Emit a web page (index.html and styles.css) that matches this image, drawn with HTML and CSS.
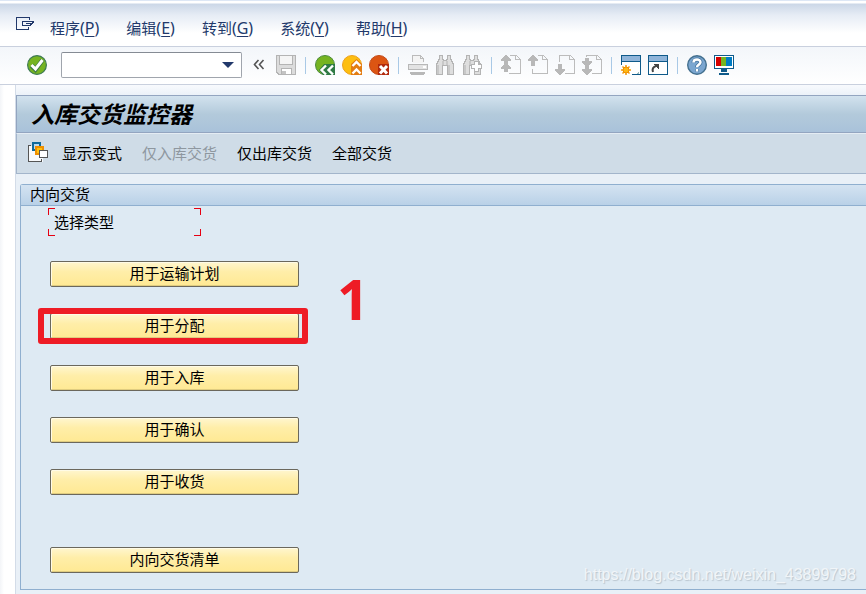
FILE: index.html
```html
<!DOCTYPE html>
<html lang="zh-CN">
<head>
    <meta charset="utf-8">
    <title>入库交货监控器</title>
    <link rel="stylesheet" href="styles.css">
</head>
<body>
    <nav class="menubar">
        <button class="icon window-menu" aria-label="菜单">
            <svg width="20" height="20" viewBox="0 0 20 20" fill="none" stroke="#22396b" shape-rendering="crispEdges">
                <path d="M13.5 4V1.5H.5v12h12V11"/>
                <path d="M18 5.500H6.500v4h7M17.500 6l-4 4M14.500 7.500H10"/>
            </svg>
        </button>
        <button class="menu">程序<span>(<u>P</u>)</span></button>
        <button class="menu">编辑<span>(<u>E</u>)</span></button>
        <button class="menu">转到<span>(<u>G</u>)</span></button>
        <button class="menu">系统<span>(<u>Y</u>)</span></button>
        <button class="menu">帮助<span>(<u>H</u>)</span></button>
    </nav>

    <div class="toolbar">
        <button class="icon ok" aria-label="确认">
            <svg width="20" height="20" viewBox="0 0 20 20">
                <circle cx="10" cy="10" r="9.4" fill="#76b421" stroke="#3e7a55" stroke-width="1.2"/>
                <path d="M4.5 10.5l4 4L15.5 5" fill="none" stroke="#3e7a45" stroke-width="4.6"/>
                <path d="M4.5 10l4 4L15.5 5" fill="none" stroke="#fff" stroke-width="3"/>
            </svg>
        </button>
        <div class="command">
            <input type="text" aria-label="命令">
            <button aria-label="历史">
                <svg width="12" height="6" viewBox="0 0 12 6"><path d="M0 0h12L9 3 6 6 3 3z" fill="#22396b"/></svg>
            </button>
        </div>
        <button class="icon collapse" aria-label="收起">
            <svg width="12" height="20" viewBox="0 0 12 20" fill="none" stroke="#555" stroke-width="1.6"><path d="M5.5 5L1.5 9.5l4 4.5M10.5 5l-4 4.5 4 4.5"/></svg>
        </button>
        <button class="icon" aria-label="保存">
            <svg width="20" height="20" viewBox="0 0 20 20" shape-rendering="crispEdges">
                <path d="M.5.5h19v19H3l-2.500-2.500z" fill="#dcdcdc" stroke="#b4b4b4"/>
                <path d="M3.500.5h13v9h-13z" fill="#f5f5f5" stroke="#b4b4b4"/>
                <path d="M5.500 13.500h10v6h-10z" fill="#fff" stroke="#b4b4b4"/>
                <path d="M6 16h4v3H6z" fill="#c4c4c4"/>
            </svg>
        </button>
        <span class="sep"></span>
        <button class="icon" aria-label="返回">
            <svg width="20" height="20" viewBox="0 0 20 20">
                <circle cx="10" cy="10" r="9.500" fill="#76b421" stroke="#4c8a3c"/>
                <path d="M20 9v11H8l-4-5 5-6z" fill="#2f7a44"/>
                <path d="M11 10.500L6.500 15l4.500 4.500M18 10.500L13.500 15l4.500 4.500" fill="none" stroke="#fff" stroke-width="2.400"/>
            </svg>
        </button>
        <button class="icon" aria-label="退出">
            <svg width="20" height="20" viewBox="0 0 20 20">
                <circle cx="10" cy="10" r="9.500" fill="#fdbe10" stroke="#eda01c"/>
                <path d="M9 20V9l5.500-5L20 9v11z" fill="#e37c12"/>
                <path d="M10.500 11l4-4 4 4M10.500 18.500l4-4 4 4" fill="none" stroke="#fff" stroke-width="2.400"/>
            </svg>
        </button>
        <button class="icon" aria-label="取消">
            <svg width="20" height="20" viewBox="0 0 20 20">
                <circle cx="10" cy="10" r="9.500" fill="#dc5513" stroke="#c34a17"/>
                <path d="M9 9h11v11H9z" fill="#b22a0d"/>
                <path d="M11 11l7 7.500M18 11l-7 7.500" fill="none" stroke="#fff" stroke-width="3"/>
            </svg>
        </button>
        <span class="sep"></span>
        <button class="icon" aria-label="打印">
            <svg width="20" height="20" viewBox="0 0 20 20" shape-rendering="crispEdges">
                <path d="M4.500 7.500v-7h8l3 3v4" fill="#f4f4f4"/>
                <path d="M4.500 7V.5h8l3 3V7M12.500.5v3h3" fill="none" stroke="#bbb"/>
                <rect x=".5" y="9.500" width="19" height="5" rx="1" fill="#e3e3e3" stroke="#b8b8b8"/>
                <path d="M15 11h3v2h-3z" fill="#fff"/>
                <path d="M2 17h15v1l-1 2H3l-1-2z" fill="#b8b8b8"/>
            </svg>
        </button>
        <button class="icon" aria-label="查找">
            <svg width="20" height="20" viewBox="0 0 20 20" shape-rendering="crispEdges">
                <path d="M4.500.5h3v3l1 2h3l1-2v-3h3v3l3 6v10h-6v-9h-5v9h-6v-10l3-6z" fill="#dedede" stroke="#b4b4b4"/>
                <path d="M3 10v9M14 10v9M8 6v4M12 6v4" stroke="#c8c8c8" stroke-width="2"/>
            </svg>
        </button>
        <button class="icon" aria-label="查找下一个">
            <svg width="20" height="20" viewBox="0 0 20 20" shape-rendering="crispEdges">
                <path d="M4.500.5h3v3l1 2h3l1-2v-3h3v3l3 6v10h-6v-9h-5v9h-6v-10l3-6z" fill="#dedede" stroke="#b4b4b4"/>
                <path d="M3 10v9M8 6v4" stroke="#c8c8c8" stroke-width="2"/>
                <path d="M12.500 6.500h4v3h3v4h-3v3h-4v-3h-3v-4h3z" fill="#fff" stroke="#b4b4b4"/>
            </svg>
        </button>
        <span class="sep"></span>
        <button class="icon" aria-label="首页">
            <svg width="20" height="20" viewBox="0 0 20 20" shape-rendering="crispEdges">
                <path d="M8.500.5h7l4 4v14h-12M14.500.5v4h4" fill="none" stroke="#bcbcbc"/>
                <path d="M5 0l5 4v2H7v3H3V6H0V4zM5 8l5 4v2H7v3H3v-3H0v-2z" fill="#b8b8b8"/>
            </svg>
        </button>
        <button class="icon" aria-label="上一页">
            <svg width="20" height="20" viewBox="0 0 20 20" shape-rendering="crispEdges">
                <path d="M9.500.5h6l4 4v14h-15v-5M14.500.5v4h4" fill="none" stroke="#bcbcbc"/>
                <path d="M5 0l5 4v2H7v5H3V6H0V4z" fill="#b8b8b8"/>
            </svg>
        </button>
        <button class="icon" aria-label="下一页">
            <svg width="20" height="20" viewBox="0 0 20 20" shape-rendering="crispEdges">
                <path d="M4.500 7v-6.500h11l4 4v14h-10M14.500.5v4h4" fill="none" stroke="#bcbcbc"/>
                <path d="M3 9h4v5h3v2l-5 4-5-4v-2h3z" fill="#b8b8b8"/>
            </svg>
        </button>
        <button class="icon" aria-label="末页">
            <svg width="20" height="20" viewBox="0 0 20 20" shape-rendering="crispEdges">
                <path d="M4.500 2v-1.500h11l4 4v14h-10M14.500.5v4h4" fill="none" stroke="#bcbcbc"/>
                <path d="M3 3h4v3h3v2l-5 4-5-4V6h3zM3 11h4v3h3v2l-5 4-5-4v-2h3z" fill="#b8b8b8"/>
            </svg>
        </button>
        <span class="sep"></span>
        <button class="icon" aria-label="新会话">
            <svg width="20" height="20" viewBox="0 0 20 20" shape-rendering="crispEdges">
                <path d="M.5.5h19v19H.5z" fill="#fff"/>
                <path d="M1 1h18v5H1z" fill="#8fb4d9"/>
                <path d="M.5 10V.5h19v19H11M1 6.500h18" fill="none" stroke="#0f5a8a"/>
                <path d="M0 10h11v10H0z" fill="#fff"/>
                <path d="M5 10v10M0 15h10M1.500 11.500l7 7M8.500 11.500l-7 7" stroke="#f39a0b" stroke-width="1.500" shape-rendering="auto"/>
                <circle cx="5" cy="15" r="3" fill="#fdb813" stroke="#f08c00" shape-rendering="auto"/>
                <path d="M16 18h1v-1h1v2h-2z" fill="#9bb"/>
            </svg>
        </button>
        <button class="icon" aria-label="快捷方式">
            <svg width="20" height="20" viewBox="0 0 20 20" shape-rendering="crispEdges">
                <path d="M.5.5h19v19H.5z" fill="#fff"/>
                <path d="M1 1h18v5H1z" fill="#8fb4d9"/>
                <path d="M.5.5h19v19H.5zM1 6.500h18" fill="none" stroke="#0f5a8a"/>
                <path d="M5 17c-1-3 0-5 3-6" fill="none" stroke="#444" stroke-width="2" shape-rendering="auto"/>
                <path d="M5 9h6v6z" fill="#444"/>
            </svg>
        </button>
        <span class="sep"></span>
        <button class="icon" aria-label="帮助">
            <svg width="20" height="20" viewBox="0 0 20 20">
                <circle cx="10" cy="10" r="9.300" fill="#7ba6d0" stroke="#44708f" stroke-width="1.400"/>
                <path d="M6.500 7.500C6.500 3.500 13.500 3.500 13.500 7.300c0 2.500-3.500 2.200-3.500 5M10 14v2.500" fill="none" stroke="#3d6f9b" stroke-width="4"/>
                <path d="M6.500 7.500C6.500 3.500 13.500 3.500 13.500 7.300c0 2.500-3.500 2.200-3.500 5M10 14v2.500" fill="none" stroke="#fff" stroke-width="2.500"/>
            </svg>
        </button>
        <button class="icon" aria-label="本地布局">
            <svg width="20" height="20" viewBox="0 0 20 20" shape-rendering="crispEdges">
                <path d="M.5.5h19v13H.5z" fill="#fff" stroke="#0f5a8a"/>
                <path d="M2 2h5v9H2z" fill="#d40000"/>
                <path d="M7 2h5v9H7z" fill="#76b421"/>
                <path d="M12 2h6v9h-6z" fill="#007cc3"/>
                <path d="M7 14h6v3h-6zM5 18h10v2H5z" fill="#0f5a8a"/>
            </svg>
        </button>
    </div>

    <main class="workspace">
        <h1>入库交货监控器</h1>
        <div class="actions">
            <button class="icon" aria-label="变式">
                <svg width="21" height="21" viewBox="0 0 21 21" shape-rendering="crispEdges">
                    <path d="M.5 3.500h14v16H.5z" fill="#f8fafc"/>
                    <path d="M3 3.500H.5v16h13V17" fill="none" stroke="#555"/>
                    <path d="M5 1h7v7H5z" fill="#bcd9ef" stroke="#0f6a9c" stroke-width="2"/>
                    <path d="M8 5h7v7H8z" fill="#ffc20e" stroke="#ee8f00" stroke-width="2"/>
                    <path d="M11.500 8.500h8v7h-8z" fill="#fff" stroke="#555"/>
                </svg>
            </button>
            <button class="action">显示变式</button>
            <button class="action" disabled>仅入库交货</button>
            <button class="action">仅出库交货</button>
            <button class="action">全部交货</button>
        </div>

        <section class="group">
            <h2>内向交货</h2>
            <div class="group-body">
                <p class="type">选择类型</p>
                <div class="choices">
                    <button>用于运输计划</button>
                    <div class="marked">
                        <button>用于分配</button>
                        <span class="mark-box"></span>
                        <span class="mark-number">1</span>
                    </div>
                    <button>用于入库</button>
                    <button>用于确认</button>
                    <button>用于收货</button>
                    <button class="list">内向交货清单</button>
                </div>
            </div>
            <div class="watermark">https://blog.csdn.net/weixin_43899798</div>
        </section>
    </main>
</body>
</html>
```

FILE: styles.css
```css
* {
    box-sizing: border-box;
}

body {
    margin: 0;
    min-height: 100vh;
    display: flex;
    flex-direction: column;
    font-family: "Noto Sans CJK SC", sans-serif;
    font-size: 15px;
    line-height: 20px;
    background: linear-gradient(to right, #f3f5f8, #fff 4px);
}

button {
    font: inherit;
    color: inherit;
    background: none;
    border: none;
    padding: 0;
    white-space: nowrap;
}

svg {
    display: block;
}

/* menu bar */
.menubar {
    display: flex;
    align-items: center;
    gap: 27px;
    height: 47px;
    padding: 9px 16px 0;
    color: #22396b;
    border-top: 1px solid #dde7f5;
    border-bottom: 1px solid #c9d0de;
    background: linear-gradient(#fff 2px, #cbd7e7 3px, #e6ecf5 14px, #fff 32px);
}

.window-menu {
    margin-right: -13px;
    margin-bottom: 4px;
}

.menu span {
    font-family: "Noto Sans", sans-serif;
    font-size: 16px;
}

.menu u {
    text-underline-offset: 2px;
}

/* standard toolbar */
.toolbar {
    display: flex;
    align-items: center;
    gap: 7px;
    height: 38px;
    padding: 0 27px 1px;
    border-bottom: 1px solid #c9d0de;
    background: linear-gradient(#f3f6fa, #fff);
}

.ok {
    margin-right: 7px;
}

.command {
    display: flex;
    width: 181px;
    height: 26px;
    border: 1px solid #a0a5ad;
    border-top-color: #858b94;
    border-radius: 2px;
    background: #fff;
}

.command input {
    flex: 1;
    min-width: 0;
    border: none;
    outline: none;
    background: none;
    font: inherit;
}

.command button {
    display: grid;
    place-items: center;
    width: 26px;
}

.collapse {
    margin: 0 4px;
}

.sep {
    width: 5px;
    height: 17px;
    background: linear-gradient(#a9c9e6, #a9c9e6) center / 1px 100% no-repeat;
}

/* work area */
.workspace {
    flex: 1;
    display: flex;
    flex-direction: column;
    margin-left: 15px;
    padding-top: 10px;
    padding-bottom: 4px;
    border-left: 1px solid #d3dce8;
    background: linear-gradient(#f8fafd, #e9f0f7 12px);
}

h1 {
    margin: 0;
    height: 38px;
    padding-left: 14px;
    font-size: 23px;
    font-style: italic;
    line-height: 34px;
    border: 1px solid #93a5c0;
    border-right: none;
    background: linear-gradient(#d2e2ee, #b3cadb 50%, #a9c2da);
}

.actions {
    display: flex;
    align-items: center;
    gap: 20px;
    height: 41px;
    padding: 0 0 2px 11px;
    border: 1px solid #a3b5cb;
    border-top-color: #e4ecf3;
    border-right: none;
    background: #cfdce7;
}

.actions .icon {
    margin-right: -7px;
}

.action:disabled {
    color: #8e979f;
}

.group {
    position: relative;
    flex: 1;
    margin: 10px 0 0 4px;
    border: 1px solid #8fafcf;
    border-right: none;
    border-radius: 3px 0 0 0;
    background: #deeaf3;
}

h2 {
    margin: 0;
    height: 21px;
    padding-left: 9px;
    font-size: 15px;
    font-weight: normal;
    line-height: 18px;
    border-bottom: 1px solid #8fafcf;
    background: linear-gradient(#d4e3f1, #b9d1e7);
}

.group-body {
    padding: 2px 29px 16px;
}

/* red corner brackets */
.type {
    --red: linear-gradient(#e60012, #e60012);
    width: 153px;
    height: 28px;
    margin: 0 0 0 -2px;
    padding-left: 6px;
    line-height: 28px;
    background:
        var(--red) left top / 7px 1px,
        var(--red) left top / 1px 7px,
        var(--red) right top / 7px 1px,
        var(--red) right top / 1px 7px,
        var(--red) left bottom / 7px 1px,
        var(--red) left bottom / 1px 7px,
        var(--red) right bottom / 7px 1px,
        var(--red) right bottom / 1px 7px;
    background-repeat: no-repeat;
}

.choices {
    display: grid;
    gap: 26px;
    width: 249px;
    margin-top: 25px;
}

.choices button {
    width: 100%;
    height: 26px;
    padding-bottom: 2px;
    border: 1px solid #6b685c;
    border-radius: 2px;
    background: linear-gradient(#fff6cf, #ffeea9 40%, #ffe993);
    box-shadow: inset 1px 1px #fffbe6, inset 0 -1px #dfcc80;
}

.choices .list {
    margin-top: 26px;
}

.marked {
    position: relative;
    height: 26px;
}

.mark-box {
    position: absolute;
    inset: -5px -9px -5px -12px;
    border: 6px solid #ee1c25;
    border-radius: 3px;
}

.mark-number {
    position: absolute;
    left: 287px;
    top: -43px;
    color: #ee1c25;
    font-family: "Open Sans", sans-serif;
    font-size: 56px;
    font-weight: bold;
    line-height: 56px;
}

.watermark {
    position: absolute;
    right: 10px;
    bottom: 4px;
    color: #f1f5f8;
    font-family: "Liberation Sans", sans-serif;
    font-size: 16px;
    text-shadow: 1px 1px 1px #b9c5ce;
}
```
